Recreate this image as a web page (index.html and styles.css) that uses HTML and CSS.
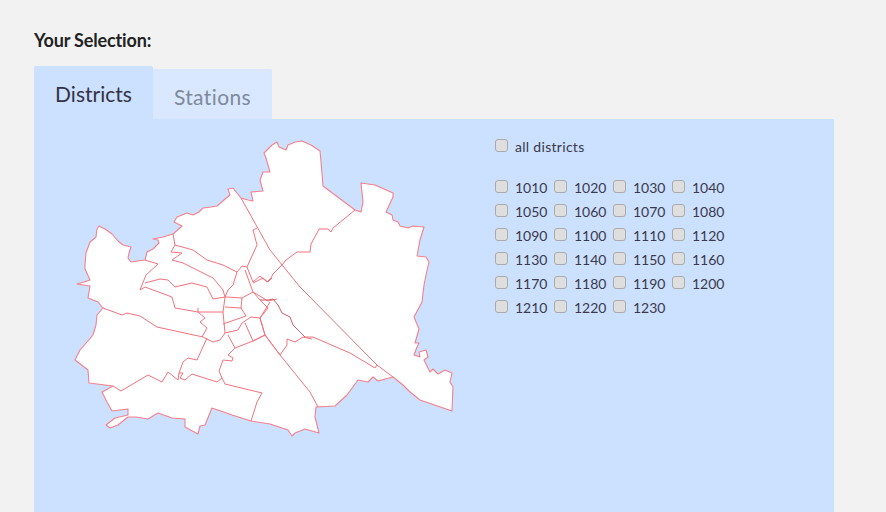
FILE: index.html
```html
<!DOCTYPE html>
<html lang="en">
<head>
<meta charset="utf-8">
<title>Your Selection</title>
<link rel="stylesheet" href="styles.css">
</head>
<body>
<main class="page">
  <h1 class="title">Your Selection:</h1>
  <div class="tabs">
    <div class="tab tab-active">Districts</div>
    <div class="tab tab-idle">Stations</div>
  </div>
  <section class="panel">
    <svg class="map" viewBox="70 136 390 304" width="390" height="304" aria-label="Map of Vienna districts">
      <path class="land" d="M77 284L84 282L90 280L85 269L85 265L86 253L90 242L96 237L97 229L99 226L105 229L112 234L118 241L123 245L131 247L129 253L128 258L131 262L138 261L145 260L147 252L153 249L159 243L158 240L153 239L163 237L173 234L182 226L174 222L177 217L187 213L193 215L199 212L203 208L211 207L217 206L224 200L230 195L228 189L233 188L241 198L248 200L253 201L251 192L263 191L260 180L263 172L270 172L266 158L264 153L272 145L277 142L279 147L286 150L288 145L295 142L302 141L311 145L320 151L322 173L323 186L355 210L361 212L363 202L361 183L375 185L393 193L393 197L386 212L392 215L393 220L398 222L400 226L408 228L413 226L424 227L420 240L417 256L426 257L429 262L426 275L424 285L422 302L414 317L419 329L415 343L419 343L417 347L414 355L420 357L419 352L426 350L428 357L424 360L430 372L433 369L438 374L445 370L452 373L450 382L453 387L452 411L420 400L410 392L403 385L393 377L378 381L373 377L368 382L358 380L347 395L335 406L316 407L315 417L319 433L305 429L295 433L292 436L288 430L270 424L251 421L232 415L212 408L205 425L200 426L198 434L185 427L185 419L172 418L158 413L148 419L136 417L128 417L118 425L110 428L106 425L115 418L128 415L128 409L112 411L107 402L102 392L113 386L89 383L88 370L75 360L80 350L87 342L93 335L96 325L97 315L103 308L98 302L88 298L90 286Z"/>
      <path class="line" d="M241 198L270 250L300 287"/>
      <path class="line thin" d="M300 287L377 365"/>
      <path class="line" d="M377 365L393 377"/>
      <path class="line" d="M355 210L333 228L331 232L328 229L319 229L317 233L311 244L310 252L297 252L286 260L282 265L273 274L271 278L267 282L260 276L253 282L247 267L257 245L253 230L257 228"/>
      <path class="line" d="M247 267L242 266L237 272L233 285L228 290L225 297"/>
      <path class="line" d="M173 234L175 245L193 250L207 260L223 265L237 272"/>
      <path class="line" d="M175 245L171 252L182 253L172 260L183 263L203 273L213 278L223 290L225 297"/>
      <path class="line" d="M145 260L158 264L146 275L140 290"/>
      <path class="line" d="M145 283L160 279L168 280L175 287L192 283L207 287L213 299L225 297"/>
      <path class="line" d="M140 290L145 287L172 297L175 308L198 312L223 312"/>
      <path class="line" d="M198 308L198 312L205 318L200 322L207 328L202 337"/>
      <path class="line" d="M103 308L122 315L127 313L140 316L157 327L203 337L213 342L220 340L225 333L223 312L225 297L227 297L242 298L241 308L225 307"/>
      <path class="line" d="M242 298L253 292L258 295L268 301L277 299"/>
      <path class="line" d="M223 324L246 316L241 308"/>
      <path class="line" d="M225 333L238 330L242 323L251 317L260 318L265 335L253 341L245 323"/>
      <path class="line" d="M228 335L235 348L253 341L265 335L280 355"/>
      <path class="line" d="M260 318L268 308L260 300L253 292L245 270"/>
      <path class="line" d="M235 348L228 355L233 358L232 361L223 360L219 371L222 378L225 384L262 393L257 402L251 421"/>
      <path class="line" d="M222 378L217 382L192 374L185 380L180 378L183 373L179 373L178 380L168 372L162 382L148 375L121 391L113 386"/>
      <path class="line" d="M207 338L197 360L188 358L183 362L179 373"/>
      <path class="line" d="M253 283L263 278L268 282L272 278"/>
      <path class="line dark" d="M260 300L268 300L273 299L278 305L282 313L290 317L293 325L305 337"/>
      <path class="line" d="M305 337L313 337L350 353L375 368L377 365"/>
      <path class="line" d="M270 302L260 318L265 335L280 355L310 392L318 407"/>
      <path class="line" d="M280 355L287 345L287 339L295 342L303 337L312 339"/>
    </svg>
    <form class="choices">
      <label class="choice all"><input class="box" type="checkbox"><span>all districts</span></label>
      <div class="grid">
        <label class="choice"><input class="box" type="checkbox"><span>1010</span></label>
        <label class="choice"><input class="box" type="checkbox"><span>1020</span></label>
        <label class="choice"><input class="box" type="checkbox"><span>1030</span></label>
        <label class="choice"><input class="box" type="checkbox"><span>1040</span></label>
        <label class="choice"><input class="box" type="checkbox"><span>1050</span></label>
        <label class="choice"><input class="box" type="checkbox"><span>1060</span></label>
        <label class="choice"><input class="box" type="checkbox"><span>1070</span></label>
        <label class="choice"><input class="box" type="checkbox"><span>1080</span></label>
        <label class="choice"><input class="box" type="checkbox"><span>1090</span></label>
        <label class="choice"><input class="box" type="checkbox"><span>1100</span></label>
        <label class="choice"><input class="box" type="checkbox"><span>1110</span></label>
        <label class="choice"><input class="box" type="checkbox"><span>1120</span></label>
        <label class="choice"><input class="box" type="checkbox"><span>1130</span></label>
        <label class="choice"><input class="box" type="checkbox"><span>1140</span></label>
        <label class="choice"><input class="box" type="checkbox"><span>1150</span></label>
        <label class="choice"><input class="box" type="checkbox"><span>1160</span></label>
        <label class="choice"><input class="box" type="checkbox"><span>1170</span></label>
        <label class="choice"><input class="box" type="checkbox"><span>1180</span></label>
        <label class="choice"><input class="box" type="checkbox"><span>1190</span></label>
        <label class="choice"><input class="box" type="checkbox"><span>1200</span></label>
        <label class="choice"><input class="box" type="checkbox"><span>1210</span></label>
        <label class="choice"><input class="box" type="checkbox"><span>1220</span></label>
        <label class="choice"><input class="box" type="checkbox"><span>1230</span></label>
      </div>
    </form>
  </section>
</main>
</body>
</html>
```
FILE: styles.css
```css
html, body {
  margin: 0;
  height: 512px;
  overflow: hidden;
  background: #f2f2f2;
}

.page {
  display: flex;
  flex-direction: column;
  height: 512px;
  padding: 0 52px 0 34px;
  box-sizing: border-box;
  font-family: Lato, "Open Sans", sans-serif;
  color: #333;
}

.title {
  margin: 30px 0 0;
  height: 36px;
  font-size: 18px;
  line-height: 21px;
  font-weight: 700;
  letter-spacing: -0.15px;
  color: #222;
}

.tabs {
  display: flex;
  align-items: flex-end;
  height: 53px;
}

.tab {
  width: 119px;
  border-radius: 2px 2px 0 0;
  box-sizing: border-box;
  text-align: center;
  font-size: 21px;
}

.tab-active {
  height: 53px;
  padding-top: 15px;
  line-height: 26px;
  background: #cce0ff;
  color: #333344;
}

.tab-idle {
  height: 50px;
  padding-top: 15px;
  line-height: 26px;
  letter-spacing: 0.4px;
  background: #d9e8ff;
  color: #7f8a99;
}

.panel {
  flex: 1;
  display: flex;
  align-items: flex-start;
  gap: 35px;
  padding: 17px 0 0 36px;
  background: #cce0ff;
}

.map {
  display: block;
  flex: none;
}

.land {
  fill: #fff;
  stroke: #f4808a;
  stroke-width: 1.1;
  stroke-linejoin: round;
}

.line {
  fill: none;
  stroke: #f2727c;
  stroke-width: 1;
  stroke-linejoin: round;
}

.thin {
  stroke: #c8505c;
  stroke-width: 0.8;
}

.dark {
  stroke: #cc5c68;
}

.choices {
  display: flex;
  flex-direction: column;
  margin-top: 2px;
}

.choice {
  display: flex;
  align-items: flex-start;
  gap: 7px;
  height: 24px;
  font-size: 14px;
  line-height: 20px;
  color: #3a3a4a;
}

.all {
  height: 26px;
  margin-bottom: 14px;
  font-size: 14px;
}

.all span {
  margin-top: -1px;
  letter-spacing: 0.3px;
}

.grid {
  display: grid;
  grid-template-columns: repeat(4, 59px);
  grid-auto-rows: 24px;
}

.box {
  appearance: none;
  flex: none;
  width: 13px;
  height: 13px;
  margin: 2px 0 0;
  border: 1px solid #aaa;
  border-radius: 3px;
  background: #dedede;
  box-sizing: border-box;
}

.all .box {
  margin-top: 1px;
}
```
